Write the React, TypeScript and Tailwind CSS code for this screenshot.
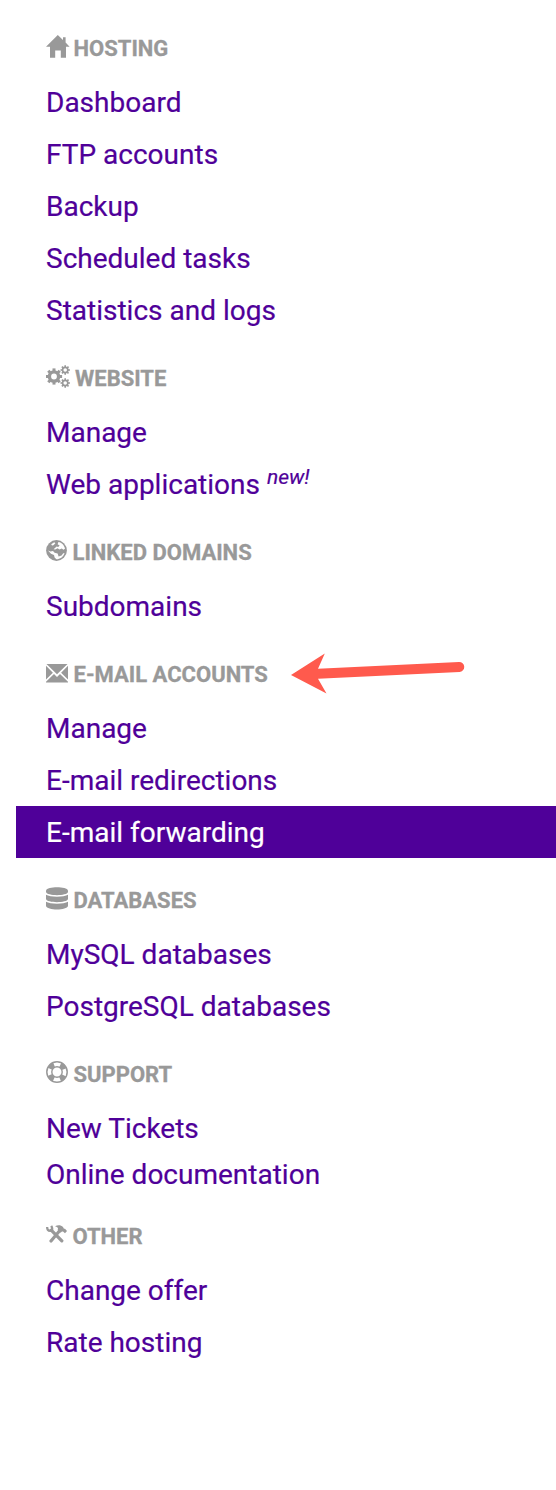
import type { ReactNode } from "react";

function HomeIcon() {
  return (
    <svg width="24" height="23" viewBox="0 0 24 23" fill="currentColor">
      <path d="M11.8 0 L17 5 V2.2 H19.6 V7.5 L23.6 11.8 H20 V22.8 H14.8 V15.4 H9.2 V22.8 H4 V11.8 H0 Z" />
    </svg>
  );
}

const toothAngles = [0, 45, 90, 135, 180, 225, 270, 315];

function Gear({ cx, cy, r, width, reach, tooth }: { cx: number; cy: number; r: number; width: number; reach: number; tooth: number }) {
  return (
    <g>
      <circle cx={cx} cy={cy} r={r} strokeWidth={width} />
      {toothAngles.map((angle) => (
        <path key={angle} d={`M${cx + r} ${cy} H${cx + reach}`} strokeWidth={tooth} transform={`rotate(${angle} ${cx} ${cy})`} />
      ))}
    </g>
  );
}

function CogsIcon() {
  return (
    <svg width="24" height="23" viewBox="0 0 24 23" fill="none" stroke="currentColor">
      <Gear cx={8} cy={11.5} r={4.6} width={3.4} reach={8.1} tooth={3} />
      <Gear cx={19.2} cy={5} r={2.6} width={1.6} reach={4.7} tooth={1.6} />
      <Gear cx={19.2} cy={18} r={2.6} width={1.6} reach={4.7} tooth={1.6} />
    </svg>
  );
}

function GlobeIcon() {
  return (
    <svg width="21" height="21" viewBox="0 0 21 21" fill="currentColor">
      <circle cx="10.5" cy="10.5" r="10.4" />
      <g fill="#ffffff">
        <path d="M5.2 4.2 L8.2 2.2 L9.4 3.2 L7.4 5.2 L6 5.6 Z" />
        <path d="M12.4 2 C15.8 2.6 18.4 5.4 19 8.8 L17.4 9.8 L15.8 8.6 L13.4 9.4 L11.6 8.2 L9.2 9.6 L7.6 9.2 L10.6 6.6 L12.2 7 L13.6 5.4 L11.6 4.2 Z" />
        <path d="M2 10.4 L4.4 11.6 L7 11 L8.6 12.8 L11.6 13.6 L12.6 16.4 L15.6 15.6 L17.2 13.2 L18.6 13.2 C17.2 17 14 19.2 10.4 19.2 L8.6 17.6 L8 15 L5 13.8 Z" />
      </g>
    </svg>
  );
}

function MailIcon() {
  return (
    <svg width="22" height="19" viewBox="0 0 22 19" fill="currentColor">
      <path d="M.5 0 H21.5 L11 10.2 Z M0 1.8 L6.9 8.8 L0 15.6 Z M22 1.8 V15.6 L15.1 8.8 Z M0 18.5 V17.8 L8 10 L11 13 L14 10 L22 17.8 V18.5 Z" />
    </svg>
  );
}

function DatabaseIcon() {
  return (
    <svg width="22" height="23" viewBox="0 0 22 23" fill="currentColor">
      <path d="M0 3.4 C1 -.8 21 -.8 22 3.4 V5 C21 9.2 1 9.2 0 5 Z" />
      <path d="M0 7.8 C4 10.4 18 10.4 22 7.8 V12 C21 16.2 1 16.2 0 12 Z" />
      <path d="M0 14.8 C4 17.4 18 17.4 22 14.8 V19 C21 23.6 1 23.6 0 19 Z" />
    </svg>
  );
}

function RingIcon() {
  return (
    <svg width="22" height="22" viewBox="0 0 22 22" fill="none" stroke="currentColor">
      <circle cx="11" cy="11" r="10.2" strokeWidth="1.5" />
      <circle cx="11" cy="11" r="5.2" strokeWidth="1.4" />
      <circle
        cx="11"
        cy="11"
        r="7.7"
        strokeWidth="5"
        strokeDasharray="5.8 6.295"
        strokeDashoffset="2.9"
        transform="rotate(45 11 11)"
      />
    </svg>
  );
}

function ToolsIcon() {
  return (
    <svg width="21" height="18" viewBox="0 0 21 18" fill="none" stroke="currentColor">
      <path d="M5.2 5.2 L15.8 15.8" strokeWidth="3.3" strokeLinecap="round" />
      <path d="M5 16 L13 6.5" strokeWidth="3.2" strokeLinecap="round" />
      <path d="M1.2 2 C1 4.2 2 5.8 4.2 5.8 C6.2 5.8 7 3.6 5.2 .8" strokeWidth="2.3" />
      <path d="M9 1.2 C12 -.5 15 -.1 17 2 C17.6 3.5 18 3.9 19 3.8 L21 6 L19 8.2 L17 6.4 C15.8 6.4 15.3 6.8 14.7 7.7 L11.6 5 C12.6 3.5 11.8 1.9 9 1.2 Z" fill="currentColor" stroke="none" />
    </svg>
  );
}

interface Item {
  label: string;
  badge?: string;
  active?: boolean;
  compact?: boolean;
}
interface Section {
  title: string;
  icon: ReactNode;
  iconBox: string;
  items: Item[];
  arrow?: boolean;
}

const sections: Section[] = [
  {
    title: "HOSTING",
    icon: <HomeIcon />,
    iconBox: "w-[27.5px] pb-[3px]",
    items: [
      { label: "Dashboard" },
      { label: "FTP accounts" },
      { label: "Backup" },
      { label: "Scheduled tasks" },
      { label: "Statistics and logs" },
    ],
  },
  {
    title: "WEBSITE",
    icon: <CogsIcon />,
    iconBox: "w-[29px] pb-[3px]",
    items: [{ label: "Manage" }, { label: "Web applications", badge: "new!" }],
  },
  {
    title: "LINKED DOMAINS",
    icon: <GlobeIcon />,
    iconBox: "w-[26.5px] pb-[3px]",
    items: [{ label: "Subdomains" }],
  },
  {
    title: "E-MAIL ACCOUNTS",
    icon: <MailIcon />,
    iconBox: "w-[27.5px] pb-[1px]",
    arrow: true,
    items: [{ label: "Manage" }, { label: "E-mail redirections" }, { label: "E-mail forwarding", active: true }],
  },
  {
    title: "DATABASES",
    icon: <DatabaseIcon />,
    iconBox: "w-[27.5px] pb-[3px]",
    items: [{ label: "MySQL databases" }, { label: "PostgreSQL databases" }],
  },
  {
    title: "SUPPORT",
    icon: <RingIcon />,
    iconBox: "w-[27.5px] pb-[4px]",
    items: [{ label: "New Tickets" }, { label: "Online documentation", compact: true }],
  },
  {
    title: "OTHER",
    icon: <ToolsIcon />,
    iconBox: "w-[26.5px] pb-[4px]",
    items: [{ label: "Change offer" }, { label: "Rate hosting" }],
  },
];

function Arrow() {
  return (
    <svg className="absolute left-[274px] top-[20px]" width="176" height="44" viewBox="0 0 176 44" fill="#ff5a4d">
      <path d="M1 23 L34.8 1.5 L28 16.7 L169 10 A5 5 0 0 1 169.5 20 L28 26.7 L36.5 41.5 Z" />
    </svg>
  );
}

export default function App() {
  return (
    <nav className="min-h-[1490px] w-[556px] bg-white pl-4 pt-1.5 font-['Roboto',sans-serif]">
      {sections.map((section) => (
        <section key={section.title}>
          <h2 className="relative flex h-[70px] items-center pl-[30px] pt-[14px] text-[22px] font-bold text-[#999999] [-webkit-text-stroke:0.3px]">
            <span className={`${section.iconBox} flex h-7 shrink-0 items-center`}>{section.icon}</span>
            <span className="whitespace-nowrap">{section.title}</span>
            {section.arrow && <Arrow />}
          </h2>
          <ul>
            {section.items.map((item) => (
              <li
                key={item.label}
                className={`flex items-center pl-[30px] pt-0.5 text-[28px] [-webkit-text-stroke:0.2px] ${
                  item.compact ? "h-10" : "h-[52px]"
                } ${item.active ? "bg-[#4f0099] text-white" : "text-[#4f0099]"}`}
              >
                <a className="whitespace-nowrap">
                  {item.label}
                  {item.badge && <sup className="relative ml-[7px] text-[21px] italic">{item.badge}</sup>}
                </a>
              </li>
            ))}
          </ul>
        </section>
      ))}
    </nav>
  );
}
